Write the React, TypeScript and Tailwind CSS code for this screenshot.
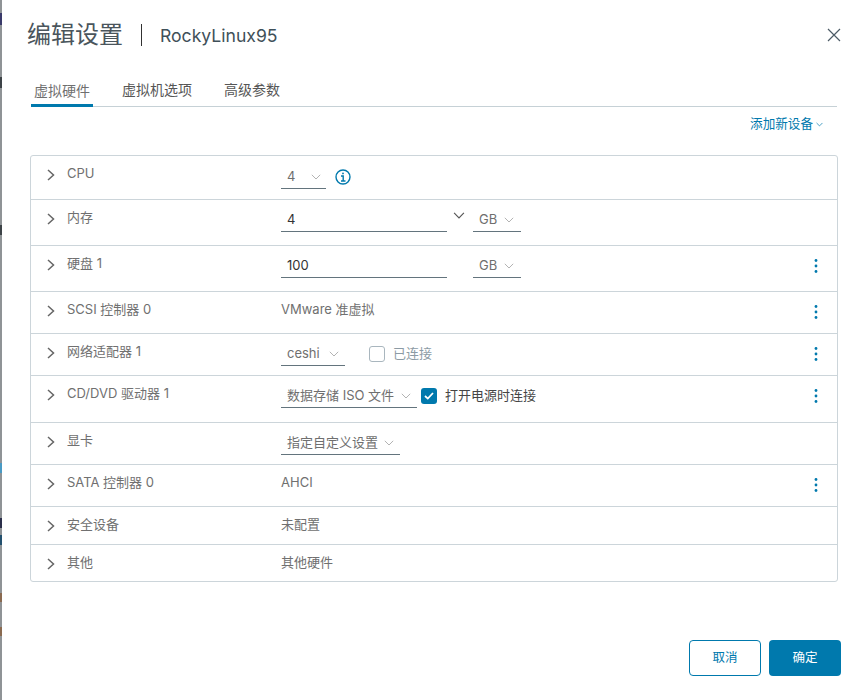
import React from "react";

const FONT = "font-['Inter','Noto_Sans_CJK_SC',sans-serif]";

function Chevron({ className = "h-[6px] w-[10px]" }: { className?: string }) {
  return (
    <svg viewBox="0 0 10 6" className={className} fill="none" stroke="currentColor" strokeWidth="1">
      <path d="M0.8 0.8 L5 5 L9.2 0.8" />
    </svg>
  );
}

function Select({ text, width, pad = "gap-2" }: { text: string; width: string; pad?: string }) {
  return (
    <div className={`flex h-[24px] items-center border-b border-[#63747d] pl-[6px] text-[13px] text-[#6f6f6f] ${width} ${pad}`}>
      <span className="whitespace-nowrap">{text}</span>
      <Chevron className="h-[6px] w-[10px] text-[#b3b3b3]" />
    </div>
  );
}

function Kebab() {
  return (
    <svg viewBox="0 0 4 14" className="absolute right-[19px] top-[13px] h-[14px] w-[4px]" fill="#0079ad">
      <circle cx="2" cy="1.5" r="1.4" />
      <circle cx="2" cy="7" r="1.4" />
      <circle cx="2" cy="12.5" r="1.4" />
    </svg>
  );
}

function Row({
  label,
  height,
  kebab,
  children,
}: {
  label: string;
  height: string;
  kebab?: boolean;
  children?: React.ReactNode;
}) {
  return (
    <div className={`relative flex border-b border-[#ccd5da] last:border-b-0 ${height}`}>
      <div className="flex w-[250px] shrink-0 items-start pl-[16px] pt-[9px]">
        <svg viewBox="0 0 8 12" className="mt-[4px] h-[12px] w-[8px] text-[#666]" fill="none" stroke="currentColor" strokeWidth="1.5">
          <path d="M1 1 L6.5 6 L1 11" />
        </svg>
        <span className="ml-[12px] whitespace-nowrap text-[13px] leading-[16px] text-[#707070]">{label}</span>
      </div>
      <div className="flex flex-1 items-start">{children}</div>
      {kebab && <Kebab />}
    </div>
  );
}

function Strip() {
  return (
    <div className="flex w-[2px] shrink-0 flex-col bg-[#8f9396]">
      <div className="mt-[13px] h-[12px] bg-[#3a3a6a]" />
      <div className="mt-[52px] h-[11px] bg-[#3d4347]" />
      <div className="mt-[137px] h-[10px] bg-[#3d4347]" />
      <div className="mt-[228px] h-[10px] bg-[#4a9ac4]" />
      <div className="mt-[45px] h-[10px] bg-[#2b2f4a]" />
      <div className="mt-[7px] h-[10px] bg-[#23506e]" />
      <div className="mt-[48px] h-[9px] bg-[#8a6a50]" />
      <div className="mt-[25px] h-[9px] bg-[#8a6a50]" />
    </div>
  );
}

export default function App() {
  return (
    <div className={`flex h-[700px] w-[859px] overflow-hidden bg-white ${FONT}`}>
      <Strip />
      <div className="relative flex min-w-0 flex-1 flex-col pl-[25px] pr-[18px]">
        <div className="flex h-[70px] items-center">
          <h1 className="text-[24px] font-normal leading-[32px] text-[#4a555c]">编辑设置</h1>
          <div className="ml-[18px] h-[22px] w-px bg-[#313131]" />
          <span className="ml-[18px] pt-[3px] text-[17.6px] text-[#3f5059]">RockyLinux95</span>
        </div>
        <button className="absolute right-[18px] top-[28px] text-[#4c5b66]" aria-label="close">
          <svg viewBox="0 0 14 14" className="h-[14px] w-[14px]" fill="none" stroke="currentColor" strokeWidth="1.2">
            <path d="M1 1 L13 13 M13 1 L1 13" />
          </svg>
        </button>

        <div className="mx-[4px] flex h-[37px] items-end border-b border-[#c6d1d6] text-[14px] text-[#565656]">
          <div className="-mb-px flex h-[37px] w-[62px] items-center justify-center border-b-[3px] border-[#0079ad] pt-[7px] text-[#6f6f6f]">虚拟硬件</div>
          <div className="ml-[29px] flex h-[37px] items-center pt-[4px]">虚拟机选项</div>
          <div className="ml-[32px] flex h-[37px] items-center pt-[4px]">高级参数</div>
        </div>

        <div className="mr-[4px] flex h-[48px] items-center justify-end gap-[3px] pb-[13px] pr-[14px] text-[12.6px] text-[#0079ad]">
          <span>添加新设备</span>
          <Chevron className="h-[5px] w-[7px]" />
        </div>

        <div className="mx-[3px] rounded-[3px] border border-[#ccd5da]">
          <Row label="CPU" height="h-[44px]">
            <div className="mt-[9px]"><Select text="4" width="w-[45px]" pad="gap-[16px]" /></div>
            <svg viewBox="0 0 16 16" className="ml-[9px] mt-[13px] h-[16px] w-[16px]" fill="none" stroke="#0079ad" strokeWidth="1.4">
              <circle cx="8" cy="8" r="7" />
              <path d="M6 7 H8.2 V12 M6 12 H10.5" />
              <circle cx="8" cy="4.4" r="0.9" fill="#0079ad" stroke="none" />
            </svg>
          </Row>
          <Row label="内存" height="h-[46px]">
            <div className="mt-[8px] flex h-[24px] w-[166px] items-center border-b border-[#63747d] pl-[6px] text-[13px] text-[#333]">4</div>
            <Chevron className="ml-[6px] mt-[12px] h-[7px] w-[12px] text-[#565656]" />
            <div className="ml-[8px] mt-[8px]"><Select text="GB" width="w-[48px]" pad="gap-[7px]" /></div>
          </Row>
          <Row label="硬盘 1" height="h-[46px]" kebab>
            <div className="mt-[8px] flex h-[24px] w-[166px] items-center border-b border-[#63747d] pl-[6px] text-[13px] text-[#333]">100</div>
            <div className="ml-[26px] mt-[8px]"><Select text="GB" width="w-[48px]" pad="gap-[7px]" /></div>
          </Row>
          <Row label="SCSI 控制器 0" height="h-[42px]" kebab>
            <span className="mt-[9px] text-[13px] leading-[16px] text-[#707070]">VMware 准虚拟</span>
          </Row>
          <Row label="网络适配器 1" height="h-[42px]" kebab>
            <div className="mt-[8px]"><Select text="ceshi" width="w-[64px]" pad="gap-[9px]" /></div>
            <div className="ml-[24px] mt-[12px] h-[16px] w-[16px] rounded-[3px] border border-[#a9b6be]" />
            <span className="ml-[8px] mt-[11px] text-[13px] leading-[16px] text-[#8c9ba5]">已连接</span>
          </Row>
          <Row label="CD/DVD 驱动器 1" height="h-[47px]" kebab>
            <div className="mt-[8px]"><Select text="数据存储 ISO 文件" width="w-[136px]" pad="gap-[7px]" /></div>
            <div className="ml-[4px] mt-[12px] flex h-[16px] w-[16px] items-center justify-center rounded-[3px] bg-[#0079ad]">
              <svg viewBox="0 0 10 8" className="h-[8px] w-[10px]" fill="none" stroke="white" strokeWidth="1.8">
                <path d="M1 4 L3.8 6.6 L9 1" />
              </svg>
            </div>
            <span className="ml-[8px] mt-[11px] text-[13px] leading-[16px] text-[#454545]">打开电源时连接</span>
          </Row>
          <Row label="显卡" height="h-[42px]">
            <div className="mt-[8px]"><Select text="指定自定义设置" width="w-[119px]" pad="gap-[6px]" /></div>
          </Row>
          <Row label="SATA 控制器 0" height="h-[42px]" kebab>
            <span className="mt-[9px] text-[13px] leading-[16px] text-[#707070]">AHCI</span>
          </Row>
          <Row label="安全设备" height="h-[38px]">
            <span className="mt-[9px] text-[13px] leading-[16px] text-[#707070]">未配置</span>
          </Row>
          <Row label="其他" height="h-[36px]">
            <span className="mt-[9px] text-[13px] leading-[16px] text-[#707070]">其他硬件</span>
          </Row>
        </div>

        <div className="mt-auto flex justify-end gap-[8px] pb-[24px]">
          <button className="h-[36px] w-[72px] rounded-[4px] border border-[#0079ad] bg-white text-[12.5px] text-[#0079ad]">取消</button>
          <button className="h-[36px] w-[72px] rounded-[4px] bg-[#0079ad] text-[12.5px] text-white">确定</button>
        </div>
      </div>
    </div>
  );
}
